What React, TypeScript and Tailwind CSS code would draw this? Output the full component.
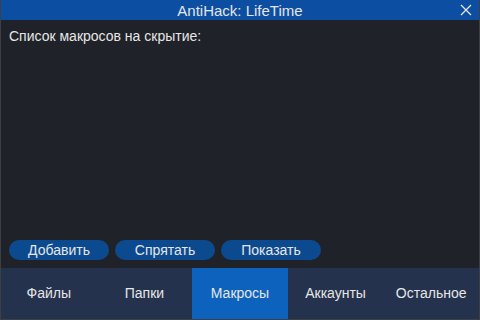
export default function App() {
  const tabs = ['Файлы', 'Папки', 'Макросы', 'Аккаунты', 'Остальное']
  const active = 2

  return (
    <div className="w-[480px] h-[320px] flex flex-col bg-[#1f2228] border-x border-b border-[#3c3f45] text-[#e6e6e6] font-['Liberation_Sans',sans-serif] overflow-hidden">
      <div className="h-5 shrink-0 bg-[#0b4ea2] flex items-center justify-center relative text-[15px] leading-none">
        AntiHack: LifeTime
        <svg className="absolute right-[7px] top-[4px]" width="12" height="12" viewBox="0 0 12 12">
          <path d="M1 1L11 11M11 1L1 11" stroke="#e6e6e6" strokeWidth="1.3" />
        </svg>
      </div>

      <div className="flex-1 flex flex-col px-[8px] pt-[8px] pb-[8px]">
        <p className="text-[14px] leading-4">Список макросов на скрытие:</p>
        <div className="flex-1" />
        <div className="flex gap-[6px]">
          {['Добавить', 'Спрятать', 'Показать'].map((b) => (
            <button key={b} className="w-[100px] h-5 rounded-full bg-[#0c4a90] text-[14px] leading-none text-[#e6e6e6]">
              {b}
            </button>
          ))}
        </div>
      </div>

      <div className="h-[51px] shrink-0 flex bg-[#25324d]">
        {tabs.map((t, i) => (
          <div
            key={t}
            className={`w-[96px] flex items-center justify-center text-[14px] ${i === active ? 'bg-[#0d62be]' : ''}`}
          >
            {t}
          </div>
        ))}
      </div>
    </div>
  )
}
